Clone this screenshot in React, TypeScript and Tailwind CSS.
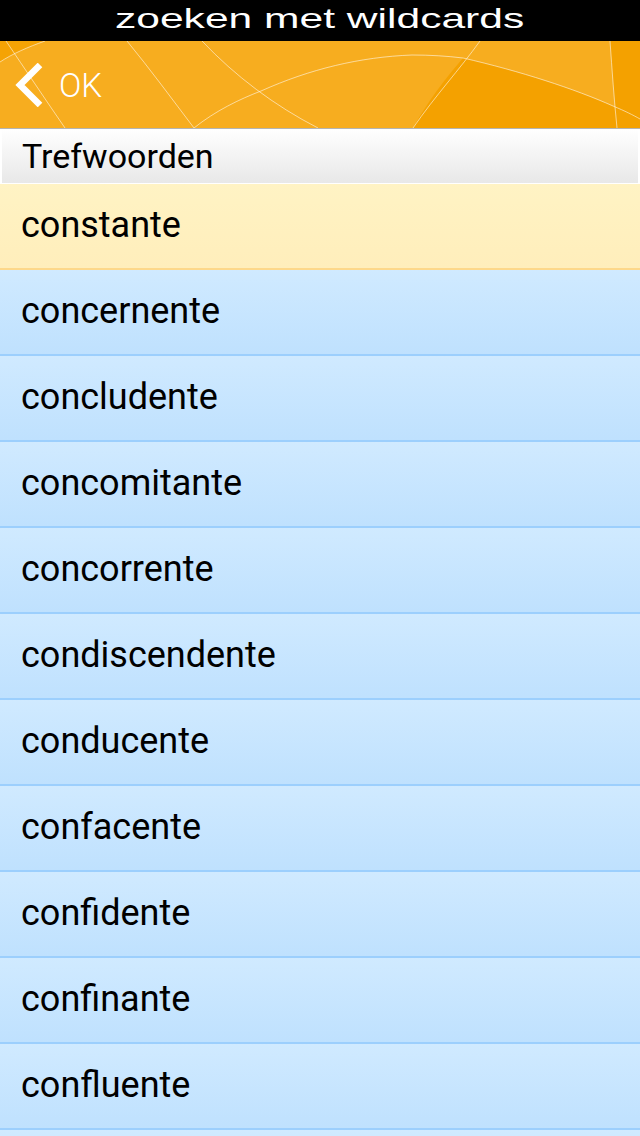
import React from "react";

const words = [
  "concernente",
  "concludente",
  "concomitante",
  "concorrente",
  "condiscendente",
  "conducente",
  "confacente",
  "confidente",
  "confinante",
  "confluente",
  "congruente",
];

// background drawing of the orange nav bar
function HeaderArt() {
  return (
    <svg
      className="absolute inset-0"
      width="640"
      height="87"
      viewBox="0 0 640 87"
      fill="none"
    >
      <rect width="640" height="87" fill="#f7ad1f" />
      <path d="M0 0 L45 0 C28 6 12 13 0 21 Z" fill="#f5a304" />
      <path
        d="M463 17 C520 30 575 48 613 65 C625 70 633 74 640 78 L640 87 L413 87 C428 60 445 38 463 17 Z"
        fill="#f4a100"
      />
      <path d="M610 0 L640 0 L640 87 L617 87 C614 58 612 28 610 0 Z" fill="#f4a100" />
      <g stroke="#ffffff" strokeOpacity="0.55" strokeWidth="1">
        <path d="M0 21 C12 13 28 6 45 0" />
        <path d="M6 0 C25 28 45 58 65 87" />
        <path d="M127 0 C150 28 172 58 194 87" />
        <path d="M202 0 C235 35 275 65 318 87" />
        <path d="M194 87 C215 70 240 58 261 50 C310 28 360 16 412 14 C430 14 447 15 463 17 C520 30 575 48 613 65 C625 70 633 74 640 78" />
        <path d="M480 0 C460 28 435 55 413 87" />
        <path d="M610 0 C612 28 614 58 617 87" />
      </g>
    </svg>
  );
}

export default function App() {
  return (
    <div className="w-[640px] h-[1136px] overflow-hidden bg-white font-['Roboto',sans-serif]">
      {/* title bar */}
      <div className="h-[41px] bg-black flex items-center justify-center">
        <span className="inline-block text-white text-[28px] leading-none font-['Liberation_Sans',Arial,sans-serif] scale-x-[1.52] -mt-[3px]">
          zoeken met wildcards
        </span>
      </div>

      {/* nav header */}
      <div className="relative h-[87px] overflow-hidden">
        <HeaderArt />
        <div className="relative h-full flex items-center pl-[14px] gap-[15px]">
          <svg width="30" height="44" viewBox="0 0 30 44" className="mt-[1px]">
            <path
              d="M26 2 L6 22 L26 42"
              stroke="#ffffff"
              strokeWidth="6.5"
              fill="none"
              strokeLinejoin="miter"
            />
          </svg>
          <span className="text-white text-[33px] font-light leading-none mt-[1px]">
            OK
          </span>
        </div>
      </div>
      <div className="h-px bg-[#b4b4b4]" />

      {/* section header */}
      <div className="px-[2px] pb-px">
        <div className="h-[54px] flex items-center pl-[20px] bg-gradient-to-b from-white to-[#e8e8e8]">
          <span className="text-[34px] text-black leading-none">Trefwoorden</span>
        </div>
      </div>

      {/* selected row */}
      <div className="h-[86px] flex items-center pl-[21px] pb-[2px] bg-gradient-to-b from-[#fff3c4] to-[#ffeebb] border-b-2 border-[#fdd88a]">
        <span className="text-[36px] text-black leading-none">constante</span>
      </div>

      {words.map((w) => (
        <div
          key={w}
          className="h-[86px] flex items-center pl-[21px] pb-[2px] bg-gradient-to-b from-[#d0eaff] to-[#bfe1fe] border-b-2 border-[#9ccffd]"
        >
          <span className="text-[36px] text-black leading-none">{w}</span>
        </div>
      ))}
    </div>
  );
}
